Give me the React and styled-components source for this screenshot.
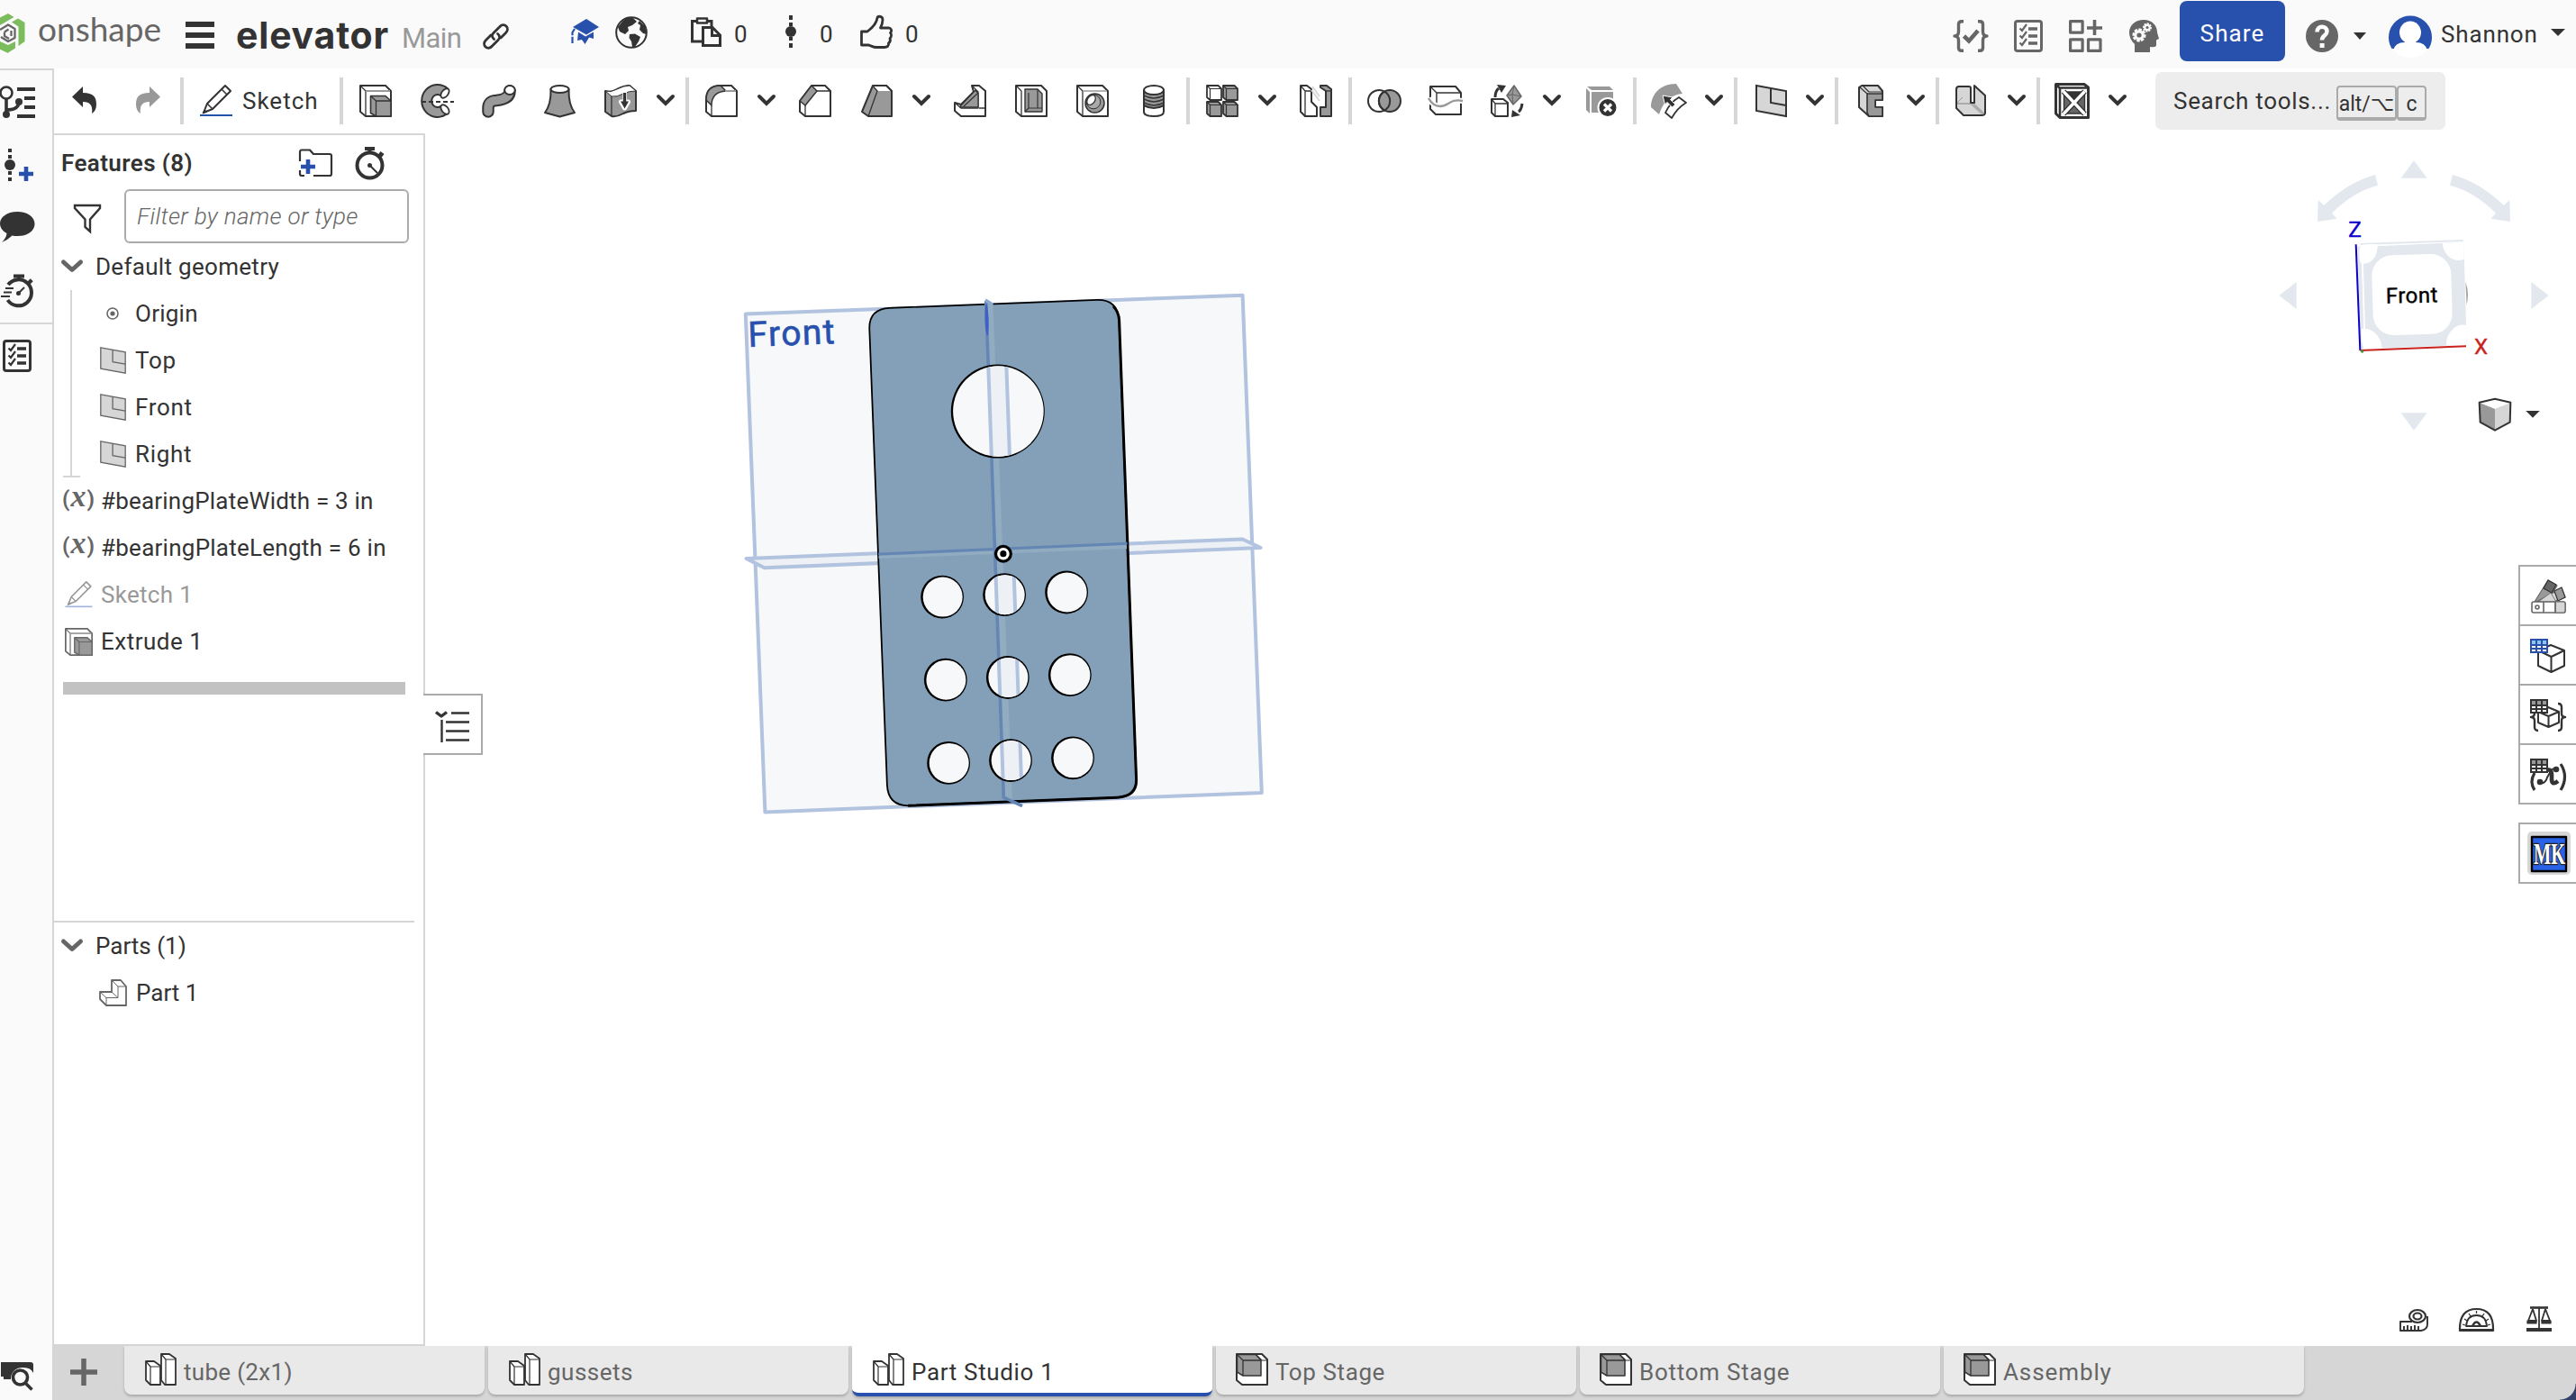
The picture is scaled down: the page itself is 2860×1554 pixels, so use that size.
import React from "react";
import styled, { createGlobalStyle, css } from "styled-components";

const D = "#333333";
const M = "#666666";
const G = "#999999";
const L = "#d6d6d6";
const BLUE = "#2850ad";

const Global = createGlobalStyle`
  *, *::before, *::after { box-sizing: border-box; }
  body { margin: 0; background: #fff; overflow: hidden; font-family: Roboto, "Noto Sans", sans-serif; color: ${D}; font-size: 26px; }
`;

const Page = styled.div`
  width: 2860px;
  height: 1554px;
  display: flex;
  flex-direction: column;
  overflow: hidden;
`;

const Svg = styled.svg`
  display: block;
  flex: none;
  overflow: visible;
  margin-left: ${(p) => p.$ml || 0}px;
  margin-top: ${(p) => p.$mt || 0}px;
`;

const Label = styled.span`
  flex: none;
  white-space: pre;
  line-height: 40px;
  letter-spacing: ${(p) => p.$ls || 0}px;
  margin-left: ${(p) => p.$ml || 0}px;
  ${(p) => p.$w && css`width: ${p.$w}px;`}
`;

const Icon = ({ w = 36, h = 36, ml, mt, children, color = D, sw = 2, vb }) => (
  <Svg width={w} height={h} viewBox={vb || `0 0 ${w} ${h}`} $ml={ml} $mt={mt} fill="none" stroke={color} strokeWidth={sw} strokeLinejoin="round">
    {children}
  </Svg>
);

/* ---------- header ---------- */
const Header = styled.header`
  height: 76px;
  flex: none;
  display: flex;
  align-items: center;
  background: #fafafa;
`;
const HeaderRight = styled.div`
  margin-left: auto;
  display: flex;
  align-items: center;
  height: 76px;
  padding: 4px 12px 0 0;
`;
const Brand = styled(Label)`
  font-family: Lato, sans-serif;
  font-size: 37px;
  color: ${M};
  margin-top: -12px;
`;
const Title = styled(Label)`
  font-family: Inter, sans-serif;
  font-size: 41px;
  font-weight: 700;
  margin-top: 2px;
`;
const Branch = styled(Label)`
  font-size: 31px;
  color: ${G};
  margin-top: 10px;
`;
const Share = styled.button`
  width: 117px;
  height: 67px;
  margin: -11px 0 0 23px;
  padding: 5px 0 0;
  border: 0;
  border-radius: 8px;
  background: ${BLUE};
  color: #fff;
  font: 26px Roboto, sans-serif;
  letter-spacing: 1.1px;
`;
const UserName = styled(Label)`
  margin-top: -4px;
`;

const Triangle = ({ w = 16, h = 8, ml, mt }) => (
  <Icon w={w} h={h} ml={ml} mt={mt}><path d={`M0 0H${w}L${w / 2} ${h}Z`} fill={D} stroke="none" /></Icon>
);

const Checklist = ({ color = D, ...r }) => (
  <Icon w={32} h={36} color={color} {...r}>
    <rect x="1.5" y="1.5" width="29" height="33" rx="2.5" strokeWidth="3" />
    <path d="M16 10h10M16 18h10M16 26h10" strokeWidth="3.6" />
    <path d="M6.5 9.5l2.5 2.5 5-7M6.5 17.5l2.5 2.5 5-7M6.5 25.5l2.5 2.5 5-7" strokeWidth="2.2" strokeLinejoin="miter" />
  </Icon>
);

const Gear = ({ x, y, r, hole }) => (
  <g stroke="none" fill="#fafafa">
    {[0, 45, 90, 135].map((a) => (
      <rect key={a} x={x - r} y={y - r * 0.24} width={r * 2} height={r * 0.48} transform={`rotate(${a + 10} ${x} ${y})`} />
    ))}
    <circle cx={x} cy={y} r={r * 0.72} />
    <circle cx={x} cy={y} r={hole} fill={M} />
  </g>
);

const HeaderBar = () => (
  <Header>
    <Icon w={28} h={44} mt={-2} sw={0}>
      <path d="M-9 9L9 0L15.500 4L0 13L-4 24V35L9 43V44L-14 33V9Z" fill="#7bbd5c" />
      <path d="M13 9.500L20 5.500L27.500 10V31L20.500 36V14.500Z" fill="#7bbd5c" />
      <path d="M-2 30L9 35L17 31V38.500L9 43.500L-2 38Z" fill="#7bbd5c" />
      <path d="M0 18L9 12.500L16.500 17V27L9 31L1 26M5 20.500L9.500 17.500M5 20.500V25L10 28M12.500 19V25" fill="none" stroke={M} strokeWidth="2.300" />
    </Icon>
    <Brand $ml={14} $w={139}>onshape</Brand>
    <Icon w={32} h={30} ml={25} mt={2} sw={6}><path d="M0 3H32M0 15H32M0 27H32" /></Icon>
    <Title $ml={24} $w={171} $ls={0.8}>elevator</Title>
    <Branch $ml={13} $w={70} $ls={-0.6}>Main</Branch>
    <Icon w={29} h={29} ml={20} mt={4} sw={2.8}>
      <path d="M12.500 17.500C9.500 15 10 12.500 12 10.500L18.500 4C21 1 24 1 26 3S28 8 25.500 10.500L20 16" strokeLinecap="round" />
      <path d="M16.500 11.500C19.500 14 19 16.500 17 18.500L10.500 25C8 28 5 28 3 26S1 21 3.500 18.500L9 13" strokeLinecap="round" />
    </Icon>
    <Icon w={32} h={28} ml={68} mt={-6} sw={0}>
      <path d="M3 9L18 0L32 9L18 17.500Z" fill={BLUE} />
      <path d="M9 14.500L17 19.500L26 14.500V22L21 20.500L16.500 28L13 23L8 24Z" fill={BLUE} />
      <path d="M5 11L2.500 15V27" stroke={BLUE} strokeWidth="2.200" fill="none" strokeDasharray="8 1.500" />
    </Icon>
    <Icon ml={18} mt={-4} sw={2}>
      <circle cx="18" cy="18" r="16.800" />
      <path d="M7 7C10 2 15 1 20 2L24 6L19 10L14 12L15 16L11 20L5 17L3 12Z" fill={D} stroke="none" />
      <path d="M16 20L22 19.500L28 23L26 28L22 34H19L18 28L15.500 24Z" fill={D} stroke="none" />
      <path d="M27 5L33 11L35 20L31 19L27 15L28 10L25 8Z" fill={D} stroke="none" />
    </Icon>
    <Icon w={34} h={33} ml={48} mt={-6} sw={3}>
      <path d="M12 27H1.500V4.500H7M18 4.500H23V10" strokeLinejoin="miter" />
      <rect x="7" y="1.500" width="11" height="5" strokeWidth="2.500" />
      <path d="M13.500 11.500H24L32.500 20V31.500H13.500ZM23.500 12V20.500H32" strokeLinejoin="miter" />
    </Icon>
    <Label $ml={14} $w={17}>0</Label>
    <Icon w={14} h={36} ml={39} mt={-6} sw={4}>
      <path d="M7 0V5M7 8V12M7 24V28M7 31V36" /><circle cx="7" cy="18" r="6" fill={D} stroke="none" />
    </Icon>
    <Label $ml={25} $w={17}>0</Label>
    <Icon w={36} h={37} ml={28} mt={-6} sw={2.8}>
      <path d="M1.500 18H8C12 15 18 10 19 3C19.500 .5 25 .5 25 5C25 9 24 11 22.500 14H32C35.500 15 35 18 33.500 19.500C35 21 35 24 33 25.500C34 28 33 30 31.500 31C32 34 30 35.500 27 35.500H18C14 35.500 12 33.500 9 33H1.500Z" />
    </Icon>
    <Label $ml={14} $w={18}>0</Label>

    <HeaderRight>
      <Icon w={38} color={M} sw={3.4}>
        <path d="M11 1.700H9Q5.500 1.700 5.500 5V13Q5.500 18 1 18Q5.500 18 5.500 23V31Q5.500 34.300 9 34.300H11M27 1.700H29Q32.500 1.700 32.500 5V13Q32.500 18 37 18Q32.500 18 32.500 23V31Q32.500 34.300 29 34.300H27" />
        <path d="M11.500 18L17 23.500L27 12" strokeWidth="4.600" strokeLinejoin="miter" />
      </Icon>
      <Checklist color={M} ml={29} />
      <Icon w={37} ml={29} color={M} sw={3.2}>
        <rect x="1.600" y="1.600" width="13.500" height="12.500" /><rect x="1.600" y="21.900" width="13.500" height="12.500" /><rect x="21.500" y="21.900" width="13.500" height="12.500" />
        <path d="M28.500 0V17M20 9H37" strokeWidth="3.600" />
      </Icon>
      <Icon w={33} ml={30} sw={0}>
        <path d="M16 0C26 0 31 7 31 14L33 21L30 22.500V28Q30 31 23 30V36H6V27C2 23 0 19 0 14C0 6 7 0 16 0Z" fill={M} />
        <Gear x={11} y={17} r={7.500} hole={2.600} /><Gear x={20} y={8.500} r={5} hole={1.600} />
      </Icon>
      <Share>Share</Share>
      <Icon w={36} ml={23} sw={0}>
        <circle cx="18" cy="18" r="18" fill={M} />
        <path d="M12.500 13.500C12.500 6 23.500 6 23.500 13C23.500 17.500 18 17 18 22.500" fill="none" stroke="#fff" strokeWidth="4.500" />
        <rect x="15.600" y="26" width="5" height="5" fill="#fff" />
      </Icon>
      <Triangle w={14} h={8} ml={17} />
      <Icon w={48} h={48} ml={25} sw={0}>
        <path d="M3.500 38A24 24 0 1 1 44.500 38Z" fill={BLUE} />
        <ellipse cx="24" cy="20" rx="12" ry="12.500" fill="#fff" />
        <path d="M5 40Q7 31 18 31V26H30V31Q41 31 43 40Q36 48 24 48T5 40Z" fill="#fff" />
      </Icon>
      <UserName $ml={10} $w={110} $ls={0.85}>Shannon</UserName>
      <Triangle ml={12} mt={-8} />
    </HeaderRight>
  </Header>
);

/* ---------- toolbar ---------- */
const Toolbar = styled.div`
  height: 72px;
  flex: none;
  display: flex;
  align-items: center;
  background: #fff;
`;
const Sep = styled.div`
  flex: none;
  width: 4px;
  height: 52px;
  margin-left: ${(p) => p.$ml}px;
  background: ${L};
`;
const SearchTools = styled.div`
  margin-left: 32px;
  width: 322px;
  height: 64px;
  padding-left: 20px;
  display: flex;
  align-items: center;
  border-radius: 7px;
  background: #ededed;
`;
const Key = styled.kbd`
  height: 39px;
  width: ${(p) => p.$w}px;
  margin: 4px 0 0 ${(p) => p.$ml || 0}px;
  border: 2px solid #aaa;
  border-bottom-width: 4px;
  border-radius: 4px;
  font: 23px/37px Roboto, "DejaVu Sans", sans-serif;
  text-align: center;
  white-space: nowrap;
`;

const Caret = ({ ml = 22 }) => (
  <Icon w={20} h={13} ml={ml} mt={-1} sw={4}><path d="M2 2L10 10L18 2" strokeLinejoin="miter" strokeLinecap="round" /></Icon>
);

const BOX = "M1 1H29L35 7V35H7L1 30Z";
const EDGES = "M1 1L7 7M7 7V35";

const Extrude = (p) => (
  <Icon {...p}>
    <path d={BOX} fill="#fff" />
    <path d="M1.500 1.500L7 7V34" strokeWidth="1.300" /><path d="M7 7H34" stroke={G} />
    <path d="M12.500 12.500H29L35 18V35H18.500L12.500 31.500Z" fill={G} strokeWidth="1.600" />
    <path d="M12.500 12.500L18.500 18V35M18.500 18H35" strokeWidth="1.300" />
  </Icon>
);
const Revolve = (p) => (
  <Icon {...p}>
    <path d="M25.500 8.500A12 12.500 0 1 0 25.500 27.500" strokeWidth="13" />
    <path d="M25.500 8.500A12 12.500 0 1 0 25.500 27.500" stroke={G} strokeWidth="9" />
    <ellipse cx="26" cy="9.500" rx="3.600" ry="6" fill="#fff" transform="rotate(38 26 9.500)" strokeWidth="1.800" />
    <ellipse cx="26" cy="27.500" rx="3.600" ry="6" fill="#fff" transform="rotate(-38 26 27.500)" strokeWidth="1.800" />
    <path d="M0 19H36" strokeDasharray="5 3" />
  </Icon>
);
const Sweep = (p) => (
  <Icon w={38} {...p}>
    <path d="M7 30V26Q7 18 16 17.500Q31 16 31 7" strokeWidth="13.500" strokeLinecap="round" />
    <path d="M7 30V26Q7 18 16 17.500Q31 16 31 6" stroke={G} strokeWidth="9.500" strokeLinecap="round" />
    <ellipse cx="31" cy="6" rx="5.800" ry="5" fill="#fff" />
  </Icon>
);
const Loft = (p) => (
  <Icon w={35} {...p}>
    <path d="M7.500 5Q8 22 1 31L17.500 35.500L34 31Q27 22 27.500 5Z" fill={G} />
    <ellipse cx="17.500" cy="5" rx="10" ry="4" fill="#fff" />
  </Icon>
);
const Thicken = (p) => (
  <Icon {...p}>
    <path d="M1 7Q7 9 14 5Q22 1 28 1L35 7V29Q27 29 21 32Q14 36 8 35L1 30Z" fill={G} />
    <path d="M1 7Q7 9 14 5Q22 1 28 1L35 7Q27 7 21 10Q14 14 8 13Z" fill="#fff" strokeWidth="1" />
    <path d="M8 13V35" strokeWidth="1.300" />
    <path d="M22.500 8V19M18.500 19H26.500L22.500 26Z" stroke="#fff" strokeWidth="5" />
    <path d="M22.500 9V20" strokeWidth="3.400" /><path d="M18 18.500H27L22.500 26.500Z" fill={D} stroke="none" />
  </Icon>
);
const Fillet = (p) => (
  <Icon {...p}>
    <path d="M1 30V17Q1 1 17 1H29L35 7V35H7Z" fill="#fff" />
    <path d="M1 17Q1 1 17 1L23 7Q7 8 7 23Z" fill={G} strokeWidth="1.500" />
    <path d="M7 23V35" strokeWidth="1.300" /><path d="M22 7H34" stroke={G} />
  </Icon>
);
const Chamfer = (p) => (
  <Icon {...p}>
    <path d="M1 30V18L14 1H29L35 7V35H7Z" fill="#fff" />
    <path d="M1 18L14 1L20 7L7 23Z" fill={G} strokeWidth="1.500" />
    <path d="M7 23V35M20 7H34" strokeWidth="1.300" />
  </Icon>
);
const Draft = (p) => (
  <Icon w={35} {...p}>
    <path d="M1 30L13 1H28L34 7V35H8Z" fill={G} />
    <path d="M13 1H28L34 7H18Z" fill="#fff" stroke="none" /><path d="M13 1H28L34 7" />
    <path d="M13.500 2L18 7L8 35" strokeWidth="1.300" />
  </Icon>
);
const Rib = (p) => (
  <Icon {...p}>
    <path d="M1 20L8 22L22 8L20 1H28L35 7V35H8L1 29Z" fill="#fff" />
    <path d="M21 2L27 8V26H8L1 20M28 26H35" strokeWidth="1.300" />
    <path d="M7 24L24 6L27 10V25H7Z" fill={G} strokeWidth="1.300" />
    <path d="M11 24L26 10" strokeWidth="1.200" />
  </Icon>
);
const Shell = (p) => (
  <Icon {...p}>
    <path d={BOX} fill="#fff" /><path d={EDGES} strokeWidth="1.300" />
    <path d="M11 5H25L30 10V30H11Z" fill={G} strokeWidth="1.400" />
    <path d="M11 30L15 26H30M15 26V9" strokeWidth="1.200" /><path d="M25 5V26" strokeWidth="1.200" />
  </Icon>
);
const Hole = (p) => (
  <Icon {...p}>
    <path d={BOX} fill="#fff" /><path d={EDGES} strokeWidth="1.300" /><path d="M7 7H34" stroke={G} strokeWidth="1.500" />
    <circle cx="20.500" cy="20.500" r="10.500" fill={G} strokeWidth="1.500" />
    <circle cx="19" cy="19" r="7.800" strokeWidth="1" fill="#aaa" />
    <ellipse cx="16.500" cy="17" rx="4" ry="6" fill="#fff" strokeWidth="1.300" transform="rotate(35 16.500 17)" />
  </Icon>
);
const Thread = (p) => (
  <Icon w={24} {...p}>
    <path d="M1 6V30Q1 35 12 35T23 30V6Z" fill="#fff" />
    <path d="M1 8V23Q12 29 23 23V8Z" fill={G} />
    <path d="M1 12Q12 18 23 12M1 16Q12 22 23 16M1 20Q12 26 23 20" strokeWidth="1.500" />
    <ellipse cx="12" cy="6" rx="11" ry="5" fill="#fff" />
  </Icon>
);
const SmallCube = ({ x, y, f }) => (
  <g transform={`translate(${x} ${y})`}>
    <path d="M1 1H13.500L17 4.500V17H4.500L1 14Z" fill={f} strokeWidth="1.800" /><path d="M1 1L4.500 4.500V17M4.500 4.500H17" strokeWidth="1.200" />
  </g>
);
const Pattern = (p) => (
  <Icon {...p}><SmallCube x={0} y={0} f="#fff" /><SmallCube x={18} y={0} f={G} /><SmallCube x={0} y={18} f={G} /><SmallCube x={18} y={18} f={G} /></Icon>
);
const Mirror = (p) => (
  <Icon {...p}>
    <path d="M1 1H8L13 5V19L19 25V35H6L1 30Z" fill="#fff" /><path d="M1 1L6 7H13M6 7V35" strokeWidth="1.300" />
    <path d="M14 2L22 13M13 6L22 18" stroke={L} strokeWidth="2" />
    <path d="M23 1H30L35 5V35H23V25H29V7L23 3Z" fill={G} /><path d="M29 7H35" strokeWidth="1.300" />
  </Icon>
);
const BooleanTool = (p) => (
  <Icon w={38} {...p}>
    <circle cx="13" cy="18" r="12" fill="#fff" /><circle cx="25" cy="18" r="12" fill={G} />
    <path d="M19 7.500A12 12 0 0 1 19 28.500" /><path d="M19 7.500A12 12 0 0 0 19 28.500" />
  </Icon>
);
const Split = (p) => (
  <Icon w={38} {...p}>
    <path d="M2 2H30L36 9V33H8L2 27Z" fill="#fff" /><path d="M2 2L9 9H36M9 9V22" strokeWidth="1.400" />
    <path d="M0 15Q5 24 13 24C22 24 24 15 38 18" stroke="#fff" strokeWidth="6" /><path d="M0 15Q5 24 13 24C22 24 24 15 38 18" stroke={G} strokeWidth="2.400" />
  </Icon>
);
const Transform = (p) => (
  <Icon w={37} {...p}>
    <path d="M26 1L34 13L25 22L18 12Z" fill={G} strokeWidth="1.500" stroke={M} /><path d="M18 12L24 11L26 1M24 11L25 22M24 11L34 13" strokeWidth="1" stroke={M} />
    <path d="M1 16H14L19 20V35H5L1 31Z" fill="#fff" /><path d="M1 16L5 21H19M5 21V35" strokeWidth="1.300" />
    <path d="M5 14Q5 7 9 4" strokeWidth="3" /><path d="M7 0L17 1L12 9Z" fill={D} stroke="none" />
    <path d="M35 21Q34 28 31 30" strokeWidth="3" /><path d="M23 36L24 28L33 34Z" fill={D} stroke="none" />
  </Icon>
);
const DeleteFace = (p) => (
  <Icon w={34} {...p}>
    <path d="M1 2H26L30 6H6Z" fill={G} stroke="none" /><path d="M0 4L4 8V32L0 28Z" fill={G} stroke="none" /><path d="M6 8H30V31H6Z" fill={G} stroke="none" />
    <circle cx="24" cy="25.500" r="10.500" fill={D} stroke="#fff" strokeWidth="2" />
    <path d="M20 21.500L28 29.500M28 21.500L20 29.500" stroke="#fff" strokeWidth="3.200" />
  </Icon>
);
const MoveFace = (p) => (
  <Icon w={40} {...p}>
    <path d="M0 26C0 12 10 0 28 0L35 11C24 12 14 18 9 34Z" fill={G} stroke="none" transform="translate(0 -1)" />
    <path d="M31 14L39 20Q29 26 23 37L16 31Q21 20 31 14Z" fill="#fff" strokeWidth="1.800" />
    <path d="M13 12L24 14L21.500 16.500L27 22L23.500 25L18 19.500L15.500 22Z" fill={D} stroke="#fff" strokeWidth="1" />
  </Icon>
);
const Plane = ({ s = D, ...p }) => (
  <Icon w={35} vb="0 0 35 36" color={s} {...p}>
    <path d="M1 1L34 7V35L1 29Z" fill={L} strokeLinejoin="miter" /><path d="M17 4V20L34 23" strokeLinejoin="miter" />
  </Icon>
);
const Frame = (p) => (
  <Icon w={28} {...p}>
    <path d="M1 3L4 1H22L27 7V17H19V25H27V35H12L1 25Z" fill={L} />
    <path d="M10 10H27V17H19V25H27V35H12L10 31Z" fill={G} strokeWidth="1.600" /><path d="M2 3L10 10M5 1L12 8H27" strokeWidth="1.200" />
  </Icon>
);
const Sheet = (p) => (
  <Icon w={34} {...p}>
    <path d="M1 5Q1 2 4 2H15Q17 2 17 4V20H21V1L33 12V31Q33 34 29 34H9L1 26Z" fill={L} />
    <path d="M2 20H20L32 31Q32 33 29 33L17 22H2Z" fill={G} stroke="none" opacity=".7" />
    <path d="M2 20L8 14" strokeWidth="1" stroke={G} />
    <path d="M17 4V20H21V1" />
  </Icon>
);
const Custom = (p) => (
  <Icon w={39} h={40} {...p}>
    <path d="M1.500 1.500H33L37.500 5V38.500H6L1.500 34Z" fill="#fff" strokeWidth="3" /><path d="M2 2L6 6V38M6 5.500H37" strokeWidth="2.600" />
    <path d="M14 10H30L22 20Z" fill={D} strokeWidth="1.400" /><path d="M14 34H30L22 24Z" fill={M} strokeWidth="1.400" />
    <path d="M10.500 13V31L19 22ZM33.500 13V31L25 22Z" fill={M} strokeWidth="1.400" />
    <path d="M10 9.500L33.500 34.500M33.500 9.500L10 34.500" stroke={D} strokeWidth="6" /><path d="M10 9.500L33.500 34.500M33.500 9.500L10 34.500" stroke="#fff" strokeWidth="3.400" />
  </Icon>
);
const Undo = ({ color = D, flip, ...p }) => (
  <Icon w={28} h={30} {...p}>
    <path d="M0 11.500L12 0V7C24 7 27 12 27 20Q27 27 22 30Q24 17 12 17V23Z" fill={color} stroke="none" transform={flip ? "translate(28 0) scale(-1 1)" : undefined} />
  </Icon>
);
const Pencil = ({ c = D, u = BLUE, ...p }) => (
  <Icon color={c} {...p}>
    <path d="M4 31L8 21L28 1L34 7L14 27Z" strokeWidth="2" /><path d="M8 21L14 27M24 5L30 11" strokeWidth="1.500" /><path d="M3 32L5 28L8 30Z" fill={c} strokeWidth="1" /><path d="M0 34H36" stroke={u} />
  </Icon>
);

const ToolBar = () => (
  <Toolbar>
    <Undo ml={20} mt={-2} /><Undo ml={42} mt={-2} color={G} flip />
    <Sep $ml={22} /><Pencil ml={18} /><Label $ml={11} $w={87} $ls={1}>Sketch</Label>
    <Sep $ml={21} /><Extrude ml={18} /><Revolve ml={33} /><Sweep ml={31} /><Loft ml={31} /><Thicken ml={32} /><Caret />
    <Sep $ml={12} /><Fillet ml={18} /><Caret /><Chamfer ml={26} /><Draft ml={33} /><Caret /><Rib ml={26} /><Shell ml={32} /><Hole ml={32} /><Thread ml={38} />
    <Sep $ml={24} /><Pattern ml={18} /><Caret /><Mirror ml={26} />
    <Sep $ml={18} /><BooleanTool ml={17} /><Split ml={30} /><Transform ml={31} /><Caret ml={21} /><DeleteFace ml={28} />
    <Sep $ml={18} /><MoveFace ml={16} /><Caret ml={20} />
    <Sep $ml={12} /><Plane ml={20} /><Caret ml={21} />
    <Sep $ml={12} /><Frame ml={22} /><Caret ml={26} />
    <Sep $ml={12} /><Sheet ml={18} /><Caret ml={24} />
    <Sep $ml={12} /><Custom ml={16} /><Caret ml={21} />
    <SearchTools>
      <Label $ls={0.7} $w={181}>Search tools...</Label>
      <Key $w={67}>alt/⌥</Key><Key $w={33}>c</Key>
    </SearchTools>
  </Toolbar>
);

/* ---------- left rail ---------- */
const Main = styled.div`
  flex: 1;
  min-height: 0;
  display: flex;
`;
const Rail = styled.nav`
  width: 60px;
  flex: none;
  padding-top: 17px;
  display: flex;
  flex-direction: column;
  gap: 34px;
  background: #fafafa;
  border-top: 2px solid ${L};
  border-right: 2px solid ${L};
`;
const RailRule = styled.div`
  height: 2px;
  flex: none;
  margin: -17px 0;
  background: ${L};
`;
const RailFoot = styled.div`
  margin-top: auto;
  padding-bottom: 11px;
`;

const LeftRail = () => (
  <Rail>
    <Icon w={40} sw={4}>
      <circle cx="7" cy="8" r="6.500" strokeWidth="2.600" /><path d="M7 15V32M7 27Q20 27 21 19" strokeWidth="3.600" />
      <circle cx="7" cy="32" r="4" fill={D} stroke="none" /><circle cx="21" cy="18" r="4" fill={D} stroke="none" />
      <path d="M19 4H39M27 14H39M27 24H39M19 34H39" strokeWidth="4" />
    </Icon>
    <Icon w={38} sw={4}>
      <path d="M11 0V4M11 7V11M11 25V29M11 32V36" /><circle cx="11" cy="18" r="6" fill={D} stroke="none" /><path d="M29 20V36M21 28H37" stroke={BLUE} strokeWidth="4.600" />
    </Icon>
    <Icon w={40} sw={0}><path d="M19 0C31 0 38.500 6 38.500 13.500S31 27 20 27Q16 27 13.500 26.500Q9 31 2 34Q7 29 7.500 24Q0 20 0 13C0 6 8 0 19 0Z" fill={D} /></Icon>
    <Icon w={40} sw={4}>
      <path d="M9 11A14.500 14.500 0 1 1 8.500 28" /><path d="M15 1.500H27M21 2V7" strokeWidth="4" /><path d="M32 6L35 9" strokeWidth="5" />
      <path d="M6 15H15M4 19.500H13M1 24H11" strokeWidth="2.200" /><path d="M27 14L19 22" strokeWidth="2" /><circle cx="20.500" cy="20.500" r="2.500" fill={D} stroke="none" />
    </Icon>
    <RailRule />
    <Checklist ml={3} />
    <RailFoot>
      <Icon w={38} h={31} sw={0}>
        <path d="M1 0H34Q37 0 37 3V12Q34 5 24 6Q13 7 12 18V19H4V16H1Z" fill={D} /><circle cx="22.500" cy="17" r="8" fill="#fafafa" stroke={D} strokeWidth="3.600" />
        <path d="M28 23L35.500 30.500" stroke={D} strokeWidth="3.600" />
      </Icon>
    </RailFoot>
  </Rail>
);

/* ---------- feature panel ---------- */
const Body = styled.div`
  flex: 1;
  min-width: 0;
  display: flex;
  flex-direction: column;
`;
const Workspace = styled.div`
  flex: 1;
  min-height: 0;
  display: flex;
  align-items: flex-start;
`;
const Panel = styled.aside`
  width: 412px;
  flex: none;
  align-self: stretch;
  display: flex;
  flex-direction: column;
  border: solid ${L};
  border-width: 2px 2px 2px 0;
`;
const PanelHead = styled.div`
  height: 60px;
  padding: 2px 0 0 8px;
  display: flex;
  align-items: center;
  font-weight: 600;
`;
const FilterRow = styled.div`
  height: 60px;
  padding-left: 22px;
  display: flex;
  align-items: center;
`;
const FilterInput = styled.div`
  width: 316px;
  height: 60px;
  margin-left: 26px;
  padding-left: 12px;
  display: flex;
  align-items: center;
  border: 2px solid #aaa;
  border-radius: 6px;
  color: ${M};
  font-style: italic;
  font-weight: 300;
`;
const Row = styled.div`
  height: 52px;
  flex: none;
  display: flex;
  align-items: center;
  padding-left: ${(p) => p.$pad}px;
  color: ${(p) => (p.$muted ? G : D)};
`;
const Branches = styled.div`
  display: flex;
  height: 208px;
`;
const Guide = styled.div`
  width: 2px;
  height: 206px;
  margin: 0 0 0 18px;
  background: ${L};
`;
const GuideRows = styled.div`
  flex: 1;
`;
const GuideFoot = styled.div`
  width: 19px;
  height: 2px;
  margin: -2px 0 0 10px;
  background: ${L};
`;
const RowIcon = styled.div`
  width: ${(p) => p.$w}px;
  flex: none;
  display: flex;
  justify-content: ${(p) => (p.$center ? "center" : "flex-start")};
`;
const Rollback = styled.div`
  width: 380px;
  height: 14px;
  margin: 19px 0 0 10px;
  flex: none;
  background: #c2c2c2;
`;
const PartsSection = styled.div`
  width: 400px;
  margin-top: 251px;
  border-top: 2px solid ${L};
`;
const VarMark = styled.span`
  display: flex;
  font: 700 24px/30px Roboto, sans-serif;
  color: ${M};
  padding-bottom: 5px;
  i { font: italic 700 34px/24px "Liberation Serif", serif; margin: 0 1px; }
`;

const Chevron = () => (
  <Icon w={24} h={16} color={M} sw={5}><path d="M2.500 3L12 11.500L21.500 3" strokeLinecap="round" /></Icon>
);
const Variable = ({ children, ls }) => (
  <Row $pad={9}><RowIcon $w={43}><VarMark>(<i>x</i>)</VarMark></RowIcon><Label $ls={ls}>{children}</Label></Row>
);

const FeaturePanel = () => (
  <Panel>
    <PanelHead>
      <Label $ls={0.4} $w={262}>Features (8)</Label>
      <Icon w={37} h={32} sw={2.2} ml={2}>
        <path d="M1 14V4Q1 1.500 3 1.500H12L16 6H34Q36 6 36 8V28Q36 30 34 30H16M6 30H3Q1 30 1 28V24" /><path d="M10 12V28M2 20H18" stroke={BLUE} strokeWidth="4.600" />
      </Icon>
      <Icon w={34} h={37} ml={25} sw={4}>
        <circle cx="16.500" cy="20.500" r="14" /><path d="M11 2H22M16.500 2V7" strokeWidth="4" /><path d="M27 7L31 10" strokeWidth="5" />
        <path d="M16 20L25 29" strokeWidth="2" /><circle cx="16.500" cy="20.500" r="2.500" fill={D} stroke="none" />
      </Icon>
    </PanelHead>
    <FilterRow>
      <Icon w={30} h={31} mt={5} sw={2.400}><path d="M1 1H29V4L18 16.500V30L12.500 25V16.500L1 4Z" strokeLinejoin="miter" /></Icon>
      <FilterInput><Label $ls={0.32}>Filter by name or type</Label></FilterInput>
    </FilterRow>
    <Row $pad={8}><Chevron /><Label $ml={14} $ls={0.3}>Default geometry</Label></Row>
    <Branches>
      <Guide />
      <GuideRows>
        <Row $pad={20}><RowIcon $w={50} $center><Icon w={14} h={14} color={M} sw={1.6}><circle cx="7" cy="7" r="6" /><circle cx="7" cy="7" r="2.600" fill={M} stroke="none" /></Icon></RowIcon><Label $ls={0.25}>Origin</Label></Row>
        {["Top", "Front", "Right"].map((n) => (
          <Row key={n} $pad={31}><RowIcon $w={39}><Plane s={M} w={29} h={30} sw={1.6} /></RowIcon><Label $ls={0.7}>{n}</Label></Row>
        ))}
      </GuideRows>
    </Branches>
    <GuideFoot />
    <Variable ls={0.2}>#bearingPlateWidth = 3 in</Variable>
    <Variable ls={0.25}>#bearingPlateLength = 6 in</Variable>
    <Row $pad={12} $muted><RowIcon $w={40}><Pencil c={G} u="#a0b4de" w={31} h={30} vb="0 0 36 36" /></RowIcon><Label $ls={0.3}>Sketch 1</Label></Row>
    <Row $pad={12}><RowIcon $w={40}><Extrude w={31} h={31} vb="0 0 36 36" color={M} /></RowIcon><Label $ls={0.5}>Extrude 1</Label></Row>
    <Rollback />
    <PartsSection>
      <Row $pad={8}><Chevron /><Label $ml={14}>Parts (1)</Label></Row>
      <Row $pad={50}>
        <RowIcon $w={41}>
          <Icon w={31} h={30} color={M} sw={1.8}>
            <path d="M1 14H14V1H24L30 8V29H8L1 22Z" fill="#fff" /><path d="M1 14L8 20.500M8 29V20.500H21V8L15 2M21 8H29M14 14L21 20.500" strokeWidth="1" />
          </Icon>
        </RowIcon>
        <Label>Part 1</Label>
      </Row>
    </PartsSection>
  </Panel>
);

/* ---------- graphics area ---------- */
const PanelToggle = styled.div`
  width: 66px;
  height: 68px;
  flex: none;
  margin: 622px 0 0 -2px;
  display: flex;
  align-items: center;
  justify-content: center;
  padding-top: 4px;
  background: #fff;
  border: 2px solid #aaa;
  border-left: 0;
`;
const Scene = styled.div`
  flex: 1;
  padding: 152px 0 0 264px;
`;
const ViewTools = styled.div`
  width: 360px;
  align-self: stretch;
  display: flex;
  flex-direction: column;
  align-items: flex-end;
  padding-top: 12px;
`;
const TableTabs = styled.div`
  width: 64px;
  flex: none;
  margin-top: ${(p) => p.$mt}px;
  border: 2px solid #aaa;
  border-right: 0;
`;
const TableTab = styled.div`
  height: 64px;
  padding: ${(p) => (p.$flush ? 0 : 2)}px 0 0 11px;
  display: flex;
  align-items: center;
  & + & { height: 66px; border-top: 2px solid #aaa; }
`;
const MeasureTools = styled.div`
  margin: auto 27px 16px 0;
  display: flex;
  align-items: flex-end;
`;
const SceneText = styled.text`
  font-family: Roboto, sans-serif;
  font-size: ${(p) => p.$size}px;
  fill: ${(p) => p.$c};
  stroke: ${(p) => p.$c};
  stroke-width: ${(p) => p.$size / 60}px;
`;

const HOLES = [
  [246.1, 362.6], [315.1, 360.2], [384.1, 357.5],
  [249.8, 454.7], [318.8, 452], [387.8, 449.2],
  [253.1, 546.9], [322, 544.1], [391, 541.3],
];

const Model = () => (
  <Svg width="640" height="620" viewBox="0 0 640 620" fill="none">
    <defs>
      <clipPath id="openings">
        <circle cx="308.3" cy="156.6" r="50.2" />
        {HOLES.map(([x, y]) => <circle key={x + y} cx={x + 0.6} cy={y} r="22" />)}
      </clipPath>
    </defs>
    <path d="M27.800 48.600L579.600 27.700L600.800 580L49.400 601.400Z" fill="#f6f8fa" stroke="#b2c3df" strokeWidth="4" strokeLinejoin="round" />
    <path d="M28.600 319.900L579.600 298.500L599.600 308L48.600 330.200Z" fill="#edf1f5" stroke="#b2c3df" strokeWidth="4" strokeLinejoin="round" />
    <path d="M187.800 41.900L418.400 32.800Q441 32.500 442.400 55.400L461.600 565.400Q462 584 440.800 585.200L208.200 594.300Q186 594 184.900 571.400L165.300 65.200Q164.500 43 187.800 41.900Z" fill="#84a0b8" stroke="#000" strokeWidth="1.800" />
    <path d="M436 40Q442 46 442.600 55.400L461.600 565.400Q462 584 440.800 585.200L208.200 594.300" stroke="#000" strokeWidth="3" />
    <path d="M295 36L302.500 37L324 590L314.300 585Z" fill="#91abc0" />
    <path d="M175.500 320L451 309V305L175.500 317Z" fill="#91abc0" />
    <path d="M294.700 34L314.300 585.200L335 594.700" stroke="#6486b4" strokeWidth="3.600" />
    <path d="M294 33L302 38" stroke="#8ba9d2" strokeWidth="3.400" />
    <path d="M295 38Q298 52 296.300 72Q293 58 295 38Z" fill="#3f5fc8" stroke="#3f5fc8" strokeWidth="1.500" />
    <path d="M175.300 315L451.500 303.300" stroke="#6486b4" strokeWidth="3" />
    <circle cx="307.800" cy="156.600" r="52" fill="#000" />
    <circle cx="308.400" cy="156.600" r="50.300" fill="#f6f8fa" />
    {HOLES.map(([x, y]) => (
      <React.Fragment key={x + y}>
        <circle cx={x} cy={y} r="23.900" fill="#000" /><circle cx={x + 0.6} cy={y} r="22" fill="#f6f8fa" />
      </React.Fragment>
    ))}
    <g clipPath="url(#openings)">
      <path d="M294.700 34L314.300 585.200L335 594.700L315 41.500Z" fill="#edf1f5" stroke="#b2c3df" strokeWidth="4" />
    </g>
    <circle cx="313.900" cy="314.700" r="10" fill="#000" /><circle cx="313.900" cy="314.700" r="6.800" fill="#fff" /><circle cx="313.900" cy="314.700" r="3.600" fill="#000" />
    <SceneText x="31" y="85" $size={39} $c={BLUE} transform="rotate(-2.300 31 85)" textLength="96">Front</SceneText>
  </Svg>
);

const ViewCube = () => (
  <Svg width="360" height="340" viewBox="0 0 1080 1020">
    <g fill="#e3e8ee">
      <path d="M497 113H584L540 55ZM149 459V549L91 504ZM931 459V549L989 504ZM497 895H584L540 953Z" />
      <path d="M411 102L420 137Q335 160 267 230L284 248L219 258L221 186L241 204Q320 127 411 102Z" />
      <path d="M669 102L660 137Q745 160 813 230L796 248L861 258L859 186L839 204Q760 127 669 102Z" />
      <path d="M352 342L364 338L375 682L362 686ZM362 330L704 318V324L362 336Z" />
      <path d="M370 342L706 326L716 668L380 682Z" />
    </g>
    <path d="M712 458Q720 480 720 500T716 536Z" fill="#a5a5a0" />
    <g fill="#fff">
      <path d="M360 342Q365 330 419 334Q420 396 366 400Q354 385 360 342ZM636 330L707 326V384Q670 395 648 365Q636 350 636 330ZM366 615Q400 610 420 640Q434 660 433 682L374 684Q362 650 366 615ZM648 670Q646 640 668 618Q690 596 716 604L716 668Z" />
      <rect x="402" y="368" width="264" height="266" rx="68" transform="rotate(-1.600 534 501)" />
    </g>
    <path d="M347 334L361 687" stroke="#0d00cc" strokeWidth="6" /><path d="M361 687L714 673" stroke="#c8231c" strokeWidth="6" /><circle cx="368" cy="690" r="5" fill="#3a9a3a" />
    <SceneText x="447" y="530" $size={72} $c="#000" transform="rotate(-1.200 447 530)" textLength="173">Front</SceneText>
    <SceneText x="322" y="310" $size={73} $c="#0d00cc">Z</SceneText>
    <SceneText x="741" y="698" $size={72} $c="#c8231c">X</SceneText>
    <path d="M758 860L810 881V953L761 926Z" fill={G} /><path d="M862 860L810 881V953L860 926Z" fill={L} /><path d="M758 860L810 848L862 860L810 881Z" fill="#fff" />
    <path d="M758 860L810 848L862 860L860 926L810 953L761 926Z" fill="none" stroke={D} strokeWidth="6" strokeLinejoin="round" />
    <path d="M913 888H959L936 911Z" fill={D} />
  </Svg>
);

const Grid = ({ c = D, f = G }) => (
  <g>
    <rect x="0" y="0" width="20" height="16" fill={c} stroke="none" />
    <path d="M2 2h4v4h-4zM8 2h4v4h-4zM14 2h4v4h-4z" fill={f} stroke="none" />
    <path d="M2 8h4v2h-4zM8 8h4v2h-4zM14 8h4v2h-4zM2 12h4v2h-4zM8 12h4v2h-4zM14 12h4v2h-4z" fill="#fff" stroke="none" />
  </g>
);

const RightTools = () => (
  <ViewTools>
    <ViewCube />
    <TableTabs $mt={127}>
      <TableTab>
        <Icon w={40} h={38} ml={1} sw={1.2} color={M}>
          <path d="M4 25L19 1L29 7L18 25Z" fill={G} /><path d="M19 1L28 6L23 15L14 10Z" fill={M} stroke={D} />
          <path d="M6 25L34 10L38 20L24 25Z" fill={L} /><path d="M26 13L34 9L38 20L30 24Z" fill={G} stroke={D} />
          <path d="M8 25L22 15L28 25Z" fill={L} strokeWidth=".8" />
          <rect x="1" y="25" width="37" height="12" rx="2" fill="#fff" strokeWidth="1.600" /><path d="M27 25H36Q38 25 38 27V35Q38 37 36 37H27Z" fill={L} /><path d="M14 25V37M27 25V37" strokeWidth="1.600" /><circle cx="7" cy="31" r="2" strokeWidth="1.600" />
        </Icon>
      </TableTab>
      <TableTab>
        <Icon w={40} h={38} sw={2}>
          <path d="M9 13L23 7L38 13V30L23.500 37L9 30ZM9 13L23.500 20L38 13M23.500 20V37" fill="#fff" /><Grid c={BLUE} f="#8ec4ee" />
        </Icon>
      </TableTab>
      <TableTab>
        <Icon w={40} h={36} sw={2}>
          <path d="M9 14L20 9L32 14V26L20.500 31L9 26ZM9 14L20.500 19L32 14M20.500 19V31" fill="#fff" />
          <path d="M31 5Q35 5 35 9V16Q35 20 39 20Q35 20 35 24V31Q35 35 31 35M9 35Q5 35 5 31V24Q5 20 1 20Q5 20 5 15" strokeWidth="2.400" /><Grid />
        </Icon>
      </TableTab>
      <TableTab>
        <Icon w={40} h={36} sw={3}>
          <path d="M5 16Q-1 26 5 35M34 6Q43 20 34 35" strokeWidth="3.200" />
          <path d="M18 13Q24 11 24 18V24Q25 30 31 25" strokeWidth="4.600" /><path d="M12 27Q17 28 19 21L23 14Q26 9 30 13" strokeWidth="2" />
          <circle cx="11" cy="26" r="3.300" fill={D} stroke="none" /><circle cx="29" cy="12" r="3.300" fill={D} stroke="none" /><Grid />
        </Icon>
      </TableTab>
    </TableTabs>
    <TableTabs $mt={20}>
      <TableTab $flush>
        <Icon w={48} h={48} ml={-3} sw={0}>
          <rect width="48" height="48" rx="5" fill={L} /><rect x="5" y="6" width="38" height="38" fill="#2962e6" stroke="#000" strokeWidth="2.400" />
          <text transform="translate(7 36) scale(.6 1)" fontFamily="Liberation Serif, serif" fontWeight="700" fontSize="34" fill="#fff" stroke="#222" strokeWidth="2.600" paintOrder="stroke">MK</text>
        </Icon>
      </TableTab>
    </TableTabs>
    <MeasureTools>
      <Icon w={32} h={25} sw={2.2}>
        <ellipse cx="20" cy="8" rx="9" ry="7" /><ellipse cx="20" cy="8" rx="4.500" ry="3.500" /><path d="M14 14H1V24H24Q31 23 31 17V8M5 23V19M9 23V18M13 23V19M17 23V18M21 23V19" strokeWidth="1.900" />
      </Icon>
      <Icon w={39} h={26} ml={34} sw={2.2}>
        <path d="M1 23Q1 1 19.500 1T38 23V25H1Z" /><path d="M8 20Q9 8 19.500 8T31 20Z" strokeWidth="1.800" /><path d="M15 20Q19.500 11 24 20" strokeWidth="2.600" />
        <path d="M4 18L7 19M6 12L9 14M11 6L13 9M19.500 3V6M28 6L26 9M33 12L30 14M35 18L32 19" strokeWidth="1.300" /><path d="M1 24.500H38" strokeWidth="3" />
      </Icon>
      <Icon w={28} h={28} ml={36} sw={1.8}>
        <path d="M4 1.500H24" strokeWidth="2.600" /><path d="M14 2V24M7 3L2 16H11L7 3M21 3L17 16H26L21 3" strokeWidth="1.800" /><path d="M1 16H11V19H1ZM17 16H27V19H17Z" fill={D} strokeWidth="1.200" /><path d="M0 26H28" strokeWidth="4" />
      </Icon>
    </MeasureTools>
  </ViewTools>
);

/* ---------- document tabs ---------- */
const TabBar = styled.footer`
  height: 60px;
  flex: none;
  display: flex;
  background: ${L};
`;
const AddTab = styled.div`
  width: 78px;
  flex: none;
  display: flex;
  align-items: center;
  justify-content: center;
  padding: 0 12px 3px 0;
`;
const Tab = styled.div`
  width: 400px;
  height: ${(p) => (p.$active ? 56 : 54)}px;
  flex: none;
  margin-right: 4px;
  padding: 0 0 ${(p) => (p.$active ? 0 : 2)}px 22px;
  display: flex;
  align-items: center;
  border-radius: 0 0 8px 8px;
  background: ${(p) => (p.$active ? "#fff" : "#e9e9e9")};
  color: ${(p) => (p.$active ? D : M)};
  box-shadow: 0 2px 3px rgba(0, 0, 0, 0.22);
  ${(p) => p.$active && css`border-bottom: 4px solid ${BLUE};`}
`;
const TabName = styled(Label)`
  margin-top: 5px;
`;
const WindowCorner = styled.div`
  width: 18px;
  height: 18px;
  margin: auto 0 0 auto;
  background: radial-gradient(circle at 0 0, ${L} 17px, #34406a 18px);
`;

const StudioIcon = () => (
  <Icon w={36} ml={1} sw={1.8}>
    <path d="M18 1H27L34 6V35H22L18 30Z" fill="#fff" /><path d="M18 1L23 7V35M23 7H34" strokeWidth="1.200" />
    <path d="M1 9H10L17 14V35H6L1 30Z" fill="#fff" /><path d="M1 9L6 15H17M6 15V35" strokeWidth="1.200" />
  </Icon>
);
const AssemblyIcon = () => (
  <Icon w={36}>
    <path d={BOX} fill="#fff" />
    <path d="M1.500 1.500H22L28 7V25H8L1.500 21Z" fill={G} strokeWidth="1.500" /><path d="M1.500 1.500L8 8V25M8 8H28" strokeWidth="1.300" /><path d="M28 8L22 1M28 8H35" strokeWidth="1.200" />
  </Icon>
);

const TABS = [
  { name: "tube (2x1)", studio: true, ls: 0.3 },
  { name: "gussets", studio: true, ls: 0.5 },
  { name: "Part Studio 1", studio: true, ls: 0.65, active: true },
  { name: "Top Stage", ls: 0.6 },
  { name: "Bottom Stage", ls: 0.75 },
  { name: "Assembly", ls: 0.9 },
];

export default function App() {
  return (
    <Page>
      <Global />
      <HeaderBar />
      <Main>
        <LeftRail />
        <Body>
          <ToolBar />
          <Workspace>
            <FeaturePanel />
            <PanelToggle>
              <Icon w={38} h={36} sw={2.400}>
                <path d="M1 2.500L7 7L13 2.500" strokeWidth="3.400" /><path d="M18 3.500H38M12 13.500H38M12 23.500H38M12 33.500H38M7.500 11V36" />
              </Icon>
            </PanelToggle>
            <Scene><Model /></Scene>
            <RightTools />
          </Workspace>
          <TabBar>
            <AddTab><Icon w={30} h={30} color={M} sw={5.500}><path d="M15 0V30M0 15H30" /></Icon></AddTab>
            {TABS.map((t) => (
              <Tab key={t.name} $active={t.active}>
                {t.studio ? <StudioIcon /> : <AssemblyIcon />}
                <TabName $ml={t.studio ? 7 : 8} $ls={t.ls}>{t.name}</TabName>
              </Tab>
            ))}
            <WindowCorner />
          </TabBar>
        </Body>
      </Main>
    </Page>
  );
}
